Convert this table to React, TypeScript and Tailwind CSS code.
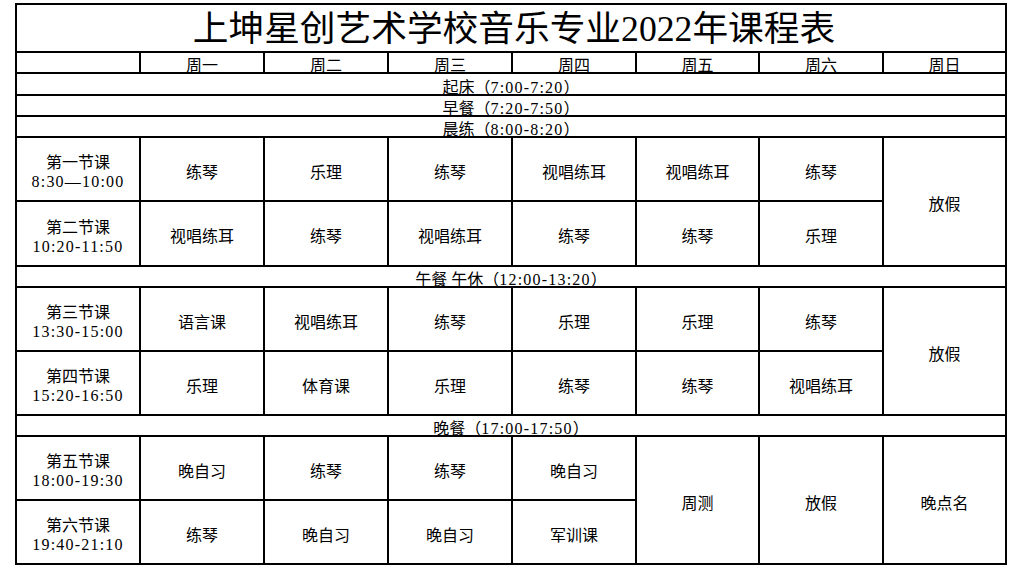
import React from "react";

const FONT = "font-['Liberation_Serif','Noto_Sans_CJK_SC',serif]";

function T({ s }: { s: string }) {
  const parts = s.split(/([0-9:\-—]+)/).filter((p) => p.length > 0);
  return (
    <>
      {parts.map((p, i) =>
        /^[0-9:\-—]+$/.test(p) ? (
          <span key={i} className="font-['Liberation_Serif',serif] text-[16px] tracking-[1.2px]">
            {p}
          </span>
        ) : (
          <span key={i}>{p}</span>
        )
      )}
    </>
  );
}

function Cell({ children, className = "" }: { children?: React.ReactNode; className?: string }) {
  return (
    <div className={`bg-white flex items-center justify-center text-center text-[16px] leading-[19px] text-black whitespace-nowrap pt-[6px] ${className}`}>
      {children}
    </div>
  );
}

function Period({ name, time }: { name: string; time: string }) {
  return (
    <Cell>
      <div className="flex flex-col items-center leading-[19px]">
        <span>{name}</span>
        <span>
          <T s={time} />
        </span>
      </div>
    </Cell>
  );
}

function Full({ s }: { s: string }) {
  return (
    <Cell className="col-span-8">
      <T s={s} />
    </Cell>
  );
}

export default function App() {
  const days = ["周一", "周二", "周三", "周四", "周五", "周六", "周日"];
  return (
    <div className={`w-[1011px] h-[568px] bg-white overflow-hidden ${FONT}`}>
      <div className="ml-[15px] mt-[3px] w-[992px] bg-black p-[2px] grid gap-[2px] grid-cols-[122px_122px_122px_122px_122px_121px_122px_121px] grid-rows-[46px_19px_20px_19px_19px_62px_63px_19px_62px_62px_19px_62px_62px]">
        <div className="col-span-8 bg-white flex items-center justify-center text-[35.7px] leading-[46px] text-black whitespace-nowrap pt-[2px] pl-[6px]">
          <span>上坤星创艺术学校音乐专业2022年课程表</span>
        </div>
        <Cell />
        {days.map((d) => (
          <Cell key={d}>{d}</Cell>
        ))}
        <Full s="起床（7:00-7:20）" />
        <Full s="早餐（7:20-7:50）" />
        <Full s="晨练（8:00-8:20）" />

        <Period name="第一节课" time="8:30—10:00" />
        <Cell>练琴</Cell>
        <Cell>乐理</Cell>
        <Cell>练琴</Cell>
        <Cell>视唱练耳</Cell>
        <Cell>视唱练耳</Cell>
        <Cell>练琴</Cell>
        <Cell className="row-span-2">放假</Cell>

        <Period name="第二节课" time="10:20-11:50" />
        <Cell>视唱练耳</Cell>
        <Cell>练琴</Cell>
        <Cell>视唱练耳</Cell>
        <Cell>练琴</Cell>
        <Cell>练琴</Cell>
        <Cell>乐理</Cell>

        <Full s="午餐 午休（12:00-13:20）" />

        <Period name="第三节课" time="13:30-15:00" />
        <Cell>语言课</Cell>
        <Cell>视唱练耳</Cell>
        <Cell>练琴</Cell>
        <Cell>乐理</Cell>
        <Cell>乐理</Cell>
        <Cell>练琴</Cell>
        <Cell className="row-span-2">放假</Cell>

        <Period name="第四节课" time="15:20-16:50" />
        <Cell>乐理</Cell>
        <Cell>体育课</Cell>
        <Cell>乐理</Cell>
        <Cell>练琴</Cell>
        <Cell>练琴</Cell>
        <Cell>视唱练耳</Cell>

        <Full s="晚餐（17:00-17:50）" />

        <Period name="第五节课" time="18:00-19:30" />
        <Cell>晚自习</Cell>
        <Cell>练琴</Cell>
        <Cell>练琴</Cell>
        <Cell>晚自习</Cell>
        <Cell className="row-span-2">周测</Cell>
        <Cell className="row-span-2">放假</Cell>
        <Cell className="row-span-2">晚点名</Cell>

        <Period name="第六节课" time="19:40-21:10" />
        <Cell>练琴</Cell>
        <Cell>晚自习</Cell>
        <Cell>晚自习</Cell>
        <Cell>军训课</Cell>
      </div>
    </div>
  );
}
